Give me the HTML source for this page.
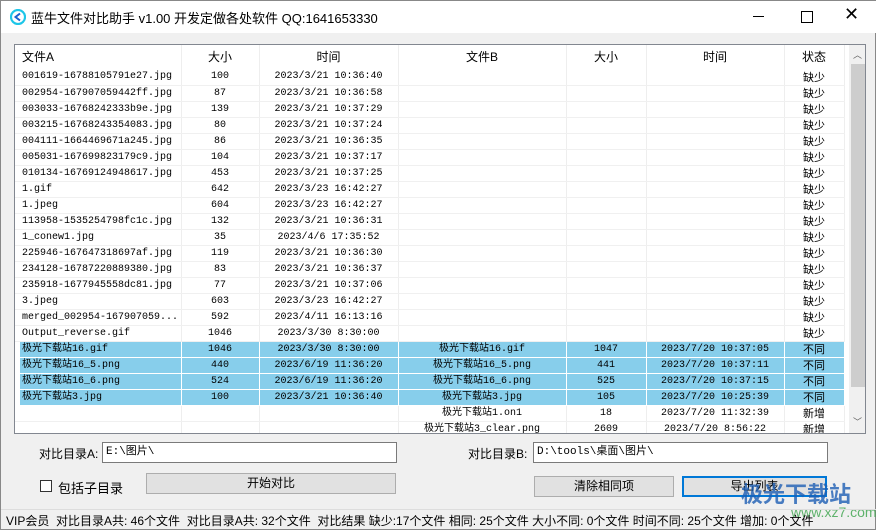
<!DOCTYPE html>
<html><head><meta charset="utf-8"><style>
body{margin:0;width:876px;height:530px;background:#f0f0f0;position:relative;overflow:hidden;font-family:"Liberation Sans","Noto Sans CJK SC",sans-serif;font-size:12px;color:#000;border:1px solid #888;box-sizing:border-box}
.a{position:absolute}
#title{left:0;top:0;width:876px;height:32px;background:#fff}
#list{left:13px;top:43px;width:852px;height:390px;background:#fff;border:1px solid #828790;box-sizing:border-box;overflow:hidden}
table{border-collapse:collapse;position:absolute;left:0;top:0;table-layout:fixed;font-family:"Liberation Mono","Noto Sans CJK SC",monospace;font-size:10px}
td{height:16px;padding:0;border-right:1px solid #eee;border-bottom:1px solid #f0f0f0;white-space:nowrap;overflow:hidden;text-align:center;box-sizing:border-box;line-height:15px}
td.l{text-align:left;padding-left:7px}
tr.h td{height:24px;font-family:"Liberation Sans","Noto Sans CJK SC",sans-serif;font-size:12px;border-bottom:none}
tr.s td{background:#87ceeb;border-bottom:1px solid #fff;border-right:1px solid #fff}
tr.s td.f{background:linear-gradient(90deg,#fff 5px,#87ceeb 5px)}
.st{font-family:"Noto Sans CJK SC",sans-serif;font-size:11px;line-height:14px!important}
.box{background:#fff;border:1px solid #7a7a7a;box-sizing:border-box;font-family:"Liberation Mono","Noto Sans CJK SC",monospace;font-size:11px;padding-left:3px;line-height:18px}
.btn{background:#e1e1e1;border:1px solid #adadad;box-sizing:border-box;text-align:center;line-height:19px;font-size:12px}
</style></head><body>
<div class="a" id="title"></div>
<svg class="a" style="left:9px;top:8px" width="16" height="16" viewBox="0 0 16 16"><circle cx="8" cy="8" r="7" fill="none" stroke="#1ec6e8" stroke-width="2.2"/><path d="M10 4.5 L5.5 8 L10 11.5" fill="none" stroke="#1a5fd0" stroke-width="2"/></svg>
<div class="a" style="left:30px;top:7px;font-size:13px">蓝牛文件对比助手 v1.00 开发定做各处软件 QQ:1641653330</div>
<div class="a" style="left:752px;top:15px;width:11px;height:1px;background:#000"></div>
<div class="a" style="left:800px;top:10px;width:10px;height:10px;border:1px solid #000"></div>
<div class="a" style="left:843px;top:3px;font-size:18px;font-weight:300">✕</div>
<div class="a" id="list">
<table>
<colgroup><col style="width:166px"><col style="width:78px"><col style="width:139px"><col style="width:168px"><col style="width:80px"><col style="width:138px"><col style="width:60px"></colgroup>
<tr class="h"><td class="l">文件A</td><td>大小</td><td>时间</td><td>文件B</td><td>大小</td><td>时间</td><td>状态</td></tr>
<tr><td class="l">001619-16788105791e27.jpg</td><td>100</td><td>2023/3/21 10:36:40</td><td></td><td></td><td></td><td class="st">缺少</td></tr>
<tr><td class="l">002954-167907059442ff.jpg</td><td>87</td><td>2023/3/21 10:36:58</td><td></td><td></td><td></td><td class="st">缺少</td></tr>
<tr><td class="l">003033-16768242333b9e.jpg</td><td>139</td><td>2023/3/21 10:37:29</td><td></td><td></td><td></td><td class="st">缺少</td></tr>
<tr><td class="l">003215-16768243354083.jpg</td><td>80</td><td>2023/3/21 10:37:24</td><td></td><td></td><td></td><td class="st">缺少</td></tr>
<tr><td class="l">004111-1664469671a245.jpg</td><td>86</td><td>2023/3/21 10:36:35</td><td></td><td></td><td></td><td class="st">缺少</td></tr>
<tr><td class="l">005031-167699823179c9.jpg</td><td>104</td><td>2023/3/21 10:37:17</td><td></td><td></td><td></td><td class="st">缺少</td></tr>
<tr><td class="l">010134-16769124948617.jpg</td><td>453</td><td>2023/3/21 10:37:25</td><td></td><td></td><td></td><td class="st">缺少</td></tr>
<tr><td class="l">1.gif</td><td>642</td><td>2023/3/23 16:42:27</td><td></td><td></td><td></td><td class="st">缺少</td></tr>
<tr><td class="l">1.jpeg</td><td>604</td><td>2023/3/23 16:42:27</td><td></td><td></td><td></td><td class="st">缺少</td></tr>
<tr><td class="l">113958-1535254798fc1c.jpg</td><td>132</td><td>2023/3/21 10:36:31</td><td></td><td></td><td></td><td class="st">缺少</td></tr>
<tr><td class="l">1_conew1.jpg</td><td>35</td><td>2023/4/6 17:35:52</td><td></td><td></td><td></td><td class="st">缺少</td></tr>
<tr><td class="l">225946-167647318697af.jpg</td><td>119</td><td>2023/3/21 10:36:30</td><td></td><td></td><td></td><td class="st">缺少</td></tr>
<tr><td class="l">234128-16787220889380.jpg</td><td>83</td><td>2023/3/21 10:36:37</td><td></td><td></td><td></td><td class="st">缺少</td></tr>
<tr><td class="l">235918-1677945558dc81.jpg</td><td>77</td><td>2023/3/21 10:37:06</td><td></td><td></td><td></td><td class="st">缺少</td></tr>
<tr><td class="l">3.jpeg</td><td>603</td><td>2023/3/23 16:42:27</td><td></td><td></td><td></td><td class="st">缺少</td></tr>
<tr><td class="l">merged_002954-167907059...</td><td>592</td><td>2023/4/11 16:13:16</td><td></td><td></td><td></td><td class="st">缺少</td></tr>
<tr><td class="l">Output_reverse.gif</td><td>1046</td><td>2023/3/30 8:30:00</td><td></td><td></td><td></td><td class="st">缺少</td></tr>
<tr class="s"><td class="l f">极光下载站16.gif</td><td>1046</td><td>2023/3/30 8:30:00</td><td>极光下载站16.gif</td><td>1047</td><td>2023/7/20 10:37:05</td><td class="st">不同</td></tr>
<tr class="s"><td class="l f">极光下载站16_5.png</td><td>440</td><td>2023/6/19 11:36:20</td><td>极光下载站16_5.png</td><td>441</td><td>2023/7/20 10:37:11</td><td class="st">不同</td></tr>
<tr class="s"><td class="l f">极光下载站16_6.png</td><td>524</td><td>2023/6/19 11:36:20</td><td>极光下载站16_6.png</td><td>525</td><td>2023/7/20 10:37:15</td><td class="st">不同</td></tr>
<tr class="s"><td class="l f">极光下载站3.jpg</td><td>100</td><td>2023/3/21 10:36:40</td><td>极光下载站3.jpg</td><td>105</td><td>2023/7/20 10:25:39</td><td class="st">不同</td></tr>
<tr><td></td><td></td><td></td><td>极光下载站1.on1</td><td>18</td><td>2023/7/20 11:32:39</td><td class="st">新增</td></tr>
<tr><td></td><td></td><td></td><td>极光下载站3_clear.png</td><td>2609</td><td>2023/7/20 8:56:22</td><td class="st">新增</td></tr>
</table>
<div class="a" style="left:834px;top:0;width:17px;height:388px;background:#f0f0f0"></div>
<div class="a" style="left:836px;top:19px;width:14px;height:323px;background:#cdcdcd"></div>
<div class="a" style="left:838px;top:3px;font-size:9px;color:#606060">︿</div>
<div class="a" style="left:838px;top:370px;font-size:9px;color:#606060">﹀</div>
</div>
<div class="a" style="left:38px;top:444px">对比目录A:</div>
<div class="a box" style="left:101px;top:441px;width:295px;height:21px">E:\图片\</div>
<div class="a" style="left:467px;top:444px">对比目录B:</div>
<div class="a box" style="left:532px;top:441px;width:295px;height:21px">D:\tools\桌面\图片\</div>
<div class="a" style="left:39px;top:479px;width:12px;height:12px;border:1px solid #333;background:#fff;box-sizing:border-box"></div>
<div class="a" style="left:57px;top:477px;font-size:13px">包括子目录</div>
<div class="a btn" style="left:145px;top:472px;width:250px;height:21px">开始对比</div>
<div class="a btn" style="left:533px;top:475px;width:140px;height:21px">清除相同项</div>
<div class="a btn" style="left:681px;top:475px;width:145px;height:21px;border:2px solid #0078d7;line-height:17px">导出列表</div>
<div class="a" style="left:740px;top:476px;font-size:22px;font-weight:bold;color:#1d5fb5;opacity:.8">极光下载站</div>
<div class="a" style="left:790px;top:503px;font-size:14px;color:#3aa34a;opacity:.8">www.xz7.com</div>
<div class="a" style="left:0;top:508px;width:876px;height:1px;background:#ddd"></div>
<div class="a" style="left:5px;top:511px;font-size:12px;white-space:nowrap">VIP会员&nbsp; 对比目录A共: 46个文件&nbsp; 对比目录A共: 32个文件&nbsp; 对比结果 缺少:17个文件 相同: 25个文件 大小不同: 0个文件 时间不同: 25个文件 增加: 0个文件</div>
</body></html>
